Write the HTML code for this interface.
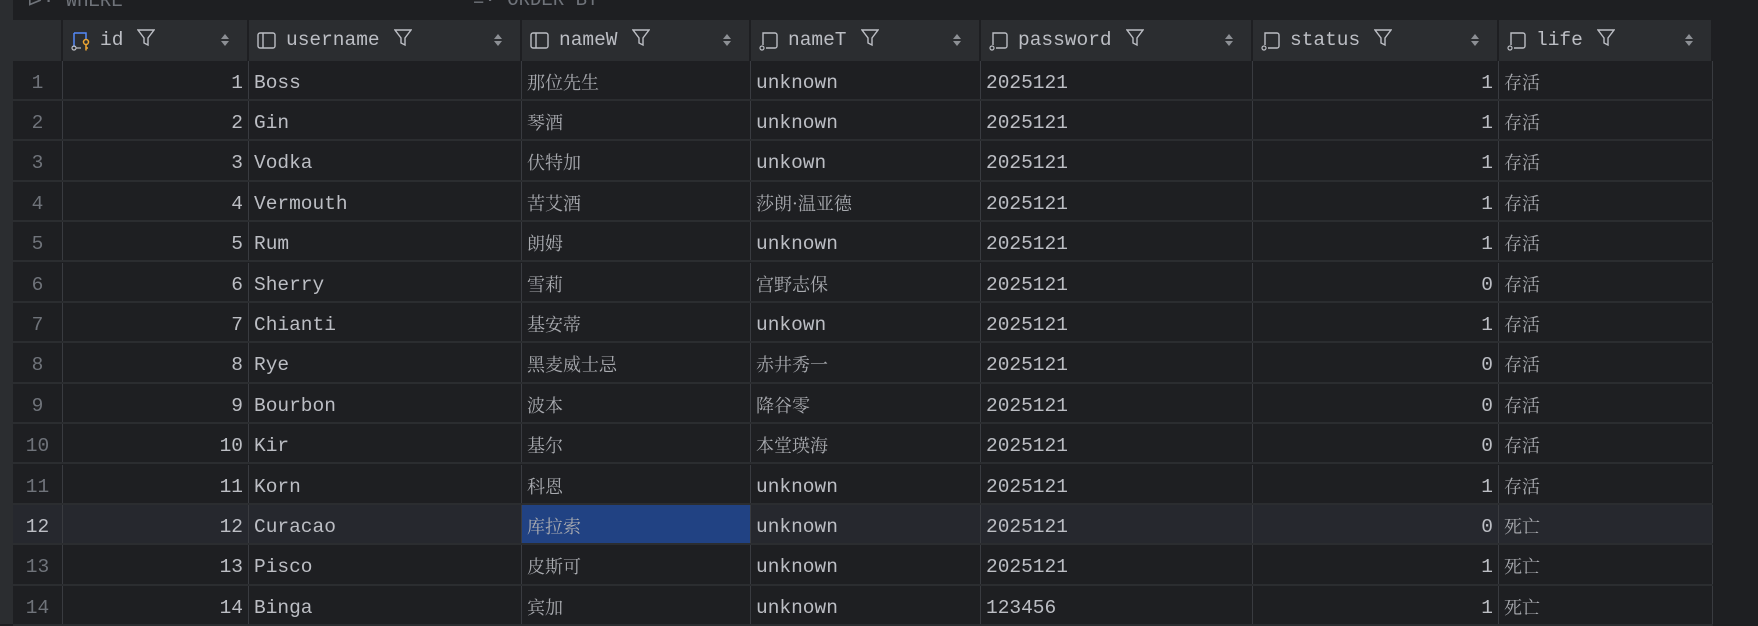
<!DOCTYPE html>
<html><head><meta charset="utf-8"><style>
*{margin:0;padding:0;box-sizing:border-box}
body{width:1758px;height:624px;overflow:hidden;background:#1e1f22;font-family:"Liberation Mono",monospace;color:#bcbec4;position:relative}
.strip{position:absolute;left:0;top:0;width:13px;height:624px;background:#2b2d30}
.top{position:absolute;left:13px;top:0;width:1745px;height:20px;background:#1e1f22;overflow:hidden}
.top span{position:absolute;top:-11px;font-size:19px;color:#6f737a}
.row{position:absolute;left:13px;width:1700px;height:40.4px;display:flex;border-bottom:2px solid #2b2d30}
.c{height:100%;border-right:1px solid #393b40;font-size:19.5px;line-height:44px;padding:0 5px;white-space:nowrap;overflow:hidden;position:relative}
.n{text-align:right}
.rn{text-align:center;color:#6f737a}
.cjk{font-family:"Noto Serif CJK SC","Noto Sans CJK SC",serif;font-size:18px;color:#a9abb0;line-height:43px}
.hd{top:20px;height:40.5px;background:#2b2d30;border-bottom:none}
.hd .c{border-right:2px solid #1e1f22;line-height:41px;padding-left:37px;color:#bcbec4}
.hd .c:first-child{padding:0}
.ic{position:absolute;left:8px;top:11px}
.fl{display:inline-block;vertical-align:middle;margin-left:14px;margin-top:-4px}
.so{position:absolute;right:18px;top:14px}
.w0{width:50px}.w1{width:186px}.w2{width:273px}.w3{width:229px}.w4{width:230px}.w5{width:272px}.w6{width:246px}.w7{width:214px}
.sel{background:#214283}
.hl{background:#26282e}
</style></head><body>
<div class="strip"></div>
<div class="top"><span style="left:14px">⊳· WHERE</span><span style="left:460px">≡· ORDER BY</span></div>

<div class="row hd">
<div class="c w0"></div>
<div class="c w1"><svg class="ic" width="22" height="20" viewBox="0 0 22 20"><path d="M3 2h12v6M3 2v14" stroke="#548af7" stroke-width="1.5" fill="none"/><circle cx="3" cy="17" r="2" stroke="#bcbec4" fill="none" stroke-width="1.2"/><path d="M5 17h5" stroke="#bcbec4" stroke-width="1.2"/><circle cx="15" cy="11" r="2.5" stroke="#f0a732" fill="none" stroke-width="1.5"/><path d="M15 13.5v6M15 17h2" stroke="#f0a732" stroke-width="1.5"/></svg>id<svg class="fl" width="18" height="18" viewBox="0 0 18 18"><path d="M1 1h16l-6 8v7l-4 -2v-5z" stroke="#bcbec4" fill="none" stroke-width="1.4"/></svg><svg class="so" width="8" height="12" viewBox="0 0 8 12"><path d="M4 0l4 5H0zM4 12l4-5H0z" fill="#8c8f94"/></svg></div>
<div class="c w2"><svg class="ic" width="20" height="20" viewBox="0 0 20 20"><rect x="1" y="2" width="17" height="15" rx="2" stroke="#bcbec4" fill="none" stroke-width="1.4"/><path d="M6 2v15" stroke="#bcbec4" stroke-width="1.4"/></svg>username<svg class="fl" width="18" height="18" viewBox="0 0 18 18"><path d="M1 1h16l-6 8v7l-4 -2v-5z" stroke="#bcbec4" fill="none" stroke-width="1.4"/></svg><svg class="so" width="8" height="12" viewBox="0 0 8 12"><path d="M4 0l4 5H0zM4 12l4-5H0z" fill="#8c8f94"/></svg></div>
<div class="c w3"><svg class="ic" width="20" height="20" viewBox="0 0 20 20"><rect x="1" y="2" width="17" height="15" rx="2" stroke="#bcbec4" fill="none" stroke-width="1.4"/><path d="M6 2v15" stroke="#bcbec4" stroke-width="1.4"/></svg>nameW<svg class="fl" width="18" height="18" viewBox="0 0 18 18"><path d="M1 1h16l-6 8v7l-4 -2v-5z" stroke="#bcbec4" fill="none" stroke-width="1.4"/></svg><svg class="so" width="8" height="12" viewBox="0 0 8 12"><path d="M4 0l4 5H0zM4 12l4-5H0z" fill="#8c8f94"/></svg></div>
<div class="c w4"><svg class="ic" width="20" height="20" viewBox="0 0 20 20"><path d="M4 14V2h12a2 2 0 0 1 2 2v11a2 2 0 0 1-2 2H7" stroke="#bcbec4" fill="none" stroke-width="1.4"/><circle cx="3" cy="17" r="2" stroke="#bcbec4" fill="none" stroke-width="1.2"/></svg>nameT<svg class="fl" width="18" height="18" viewBox="0 0 18 18"><path d="M1 1h16l-6 8v7l-4 -2v-5z" stroke="#bcbec4" fill="none" stroke-width="1.4"/></svg><svg class="so" width="8" height="12" viewBox="0 0 8 12"><path d="M4 0l4 5H0zM4 12l4-5H0z" fill="#8c8f94"/></svg></div>
<div class="c w5"><svg class="ic" width="20" height="20" viewBox="0 0 20 20"><path d="M4 14V2h12a2 2 0 0 1 2 2v11a2 2 0 0 1-2 2H7" stroke="#bcbec4" fill="none" stroke-width="1.4"/><circle cx="3" cy="17" r="2" stroke="#bcbec4" fill="none" stroke-width="1.2"/></svg>password<svg class="fl" width="18" height="18" viewBox="0 0 18 18"><path d="M1 1h16l-6 8v7l-4 -2v-5z" stroke="#bcbec4" fill="none" stroke-width="1.4"/></svg><svg class="so" width="8" height="12" viewBox="0 0 8 12"><path d="M4 0l4 5H0zM4 12l4-5H0z" fill="#8c8f94"/></svg></div>
<div class="c w6"><svg class="ic" width="20" height="20" viewBox="0 0 20 20"><path d="M4 14V2h12a2 2 0 0 1 2 2v11a2 2 0 0 1-2 2H7" stroke="#bcbec4" fill="none" stroke-width="1.4"/><circle cx="3" cy="17" r="2" stroke="#bcbec4" fill="none" stroke-width="1.2"/></svg>status<svg class="fl" width="18" height="18" viewBox="0 0 18 18"><path d="M1 1h16l-6 8v7l-4 -2v-5z" stroke="#bcbec4" fill="none" stroke-width="1.4"/></svg><svg class="so" width="8" height="12" viewBox="0 0 8 12"><path d="M4 0l4 5H0zM4 12l4-5H0z" fill="#8c8f94"/></svg></div>
<div class="c w7"><svg class="ic" width="20" height="20" viewBox="0 0 20 20"><path d="M4 14V2h12a2 2 0 0 1 2 2v11a2 2 0 0 1-2 2H7" stroke="#bcbec4" fill="none" stroke-width="1.4"/><circle cx="3" cy="17" r="2" stroke="#bcbec4" fill="none" stroke-width="1.2"/></svg>life<svg class="fl" width="18" height="18" viewBox="0 0 18 18"><path d="M1 1h16l-6 8v7l-4 -2v-5z" stroke="#bcbec4" fill="none" stroke-width="1.4"/></svg><svg class="so" width="8" height="12" viewBox="0 0 8 12"><path d="M4 0l4 5H0zM4 12l4-5H0z" fill="#8c8f94"/></svg></div>
</div>

<div class="row" style="top:60.5px"><div class="c w0 rn">1</div><div class="c w1 n">1</div><div class="c w2">Boss</div><div class="c w3 cjk">那位先生</div><div class="c w4">unknown</div><div class="c w5">2025121</div><div class="c w6 n">1</div><div class="c w7 cjk">存活</div></div>
<div class="row" style="top:100.9px"><div class="c w0 rn">2</div><div class="c w1 n">2</div><div class="c w2">Gin</div><div class="c w3 cjk">琴酒</div><div class="c w4">unknown</div><div class="c w5">2025121</div><div class="c w6 n">1</div><div class="c w7 cjk">存活</div></div>
<div class="row" style="top:141.3px"><div class="c w0 rn">3</div><div class="c w1 n">3</div><div class="c w2">Vodka</div><div class="c w3 cjk">伏特加</div><div class="c w4">unkown</div><div class="c w5">2025121</div><div class="c w6 n">1</div><div class="c w7 cjk">存活</div></div>
<div class="row" style="top:181.7px"><div class="c w0 rn">4</div><div class="c w1 n">4</div><div class="c w2">Vermouth</div><div class="c w3 cjk">苦艾酒</div><div class="c w4 cjk">莎朗·温亚德</div><div class="c w5">2025121</div><div class="c w6 n">1</div><div class="c w7 cjk">存活</div></div>
<div class="row" style="top:222.1px"><div class="c w0 rn">5</div><div class="c w1 n">5</div><div class="c w2">Rum</div><div class="c w3 cjk">朗姆</div><div class="c w4">unknown</div><div class="c w5">2025121</div><div class="c w6 n">1</div><div class="c w7 cjk">存活</div></div>
<div class="row" style="top:262.5px"><div class="c w0 rn">6</div><div class="c w1 n">6</div><div class="c w2">Sherry</div><div class="c w3 cjk">雪莉</div><div class="c w4 cjk">宫野志保</div><div class="c w5">2025121</div><div class="c w6 n">0</div><div class="c w7 cjk">存活</div></div>
<div class="row" style="top:302.9px"><div class="c w0 rn">7</div><div class="c w1 n">7</div><div class="c w2">Chianti</div><div class="c w3 cjk">基安蒂</div><div class="c w4">unkown</div><div class="c w5">2025121</div><div class="c w6 n">1</div><div class="c w7 cjk">存活</div></div>
<div class="row" style="top:343.3px"><div class="c w0 rn">8</div><div class="c w1 n">8</div><div class="c w2">Rye</div><div class="c w3 cjk">黑麦威士忌</div><div class="c w4 cjk">赤井秀一</div><div class="c w5">2025121</div><div class="c w6 n">0</div><div class="c w7 cjk">存活</div></div>
<div class="row" style="top:383.7px"><div class="c w0 rn">9</div><div class="c w1 n">9</div><div class="c w2">Bourbon</div><div class="c w3 cjk">波本</div><div class="c w4 cjk">降谷零</div><div class="c w5">2025121</div><div class="c w6 n">0</div><div class="c w7 cjk">存活</div></div>
<div class="row" style="top:424.1px"><div class="c w0 rn">10</div><div class="c w1 n">10</div><div class="c w2">Kir</div><div class="c w3 cjk">基尔</div><div class="c w4 cjk">本堂瑛海</div><div class="c w5">2025121</div><div class="c w6 n">0</div><div class="c w7 cjk">存活</div></div>
<div class="row" style="top:464.5px"><div class="c w0 rn">11</div><div class="c w1 n">11</div><div class="c w2">Korn</div><div class="c w3 cjk">科恩</div><div class="c w4">unknown</div><div class="c w5">2025121</div><div class="c w6 n">1</div><div class="c w7 cjk">存活</div></div>
<div class="row hl" style="top:504.9px"><div class="c w0 rn" style="color:#bcbec4">12</div><div class="c w1 n">12</div><div class="c w2">Curacao</div><div class="c w3 cjk sel">库拉索</div><div class="c w4">unknown</div><div class="c w5">2025121</div><div class="c w6 n">0</div><div class="c w7 cjk">死亡</div></div>
<div class="row" style="top:545.3px"><div class="c w0 rn">13</div><div class="c w1 n">13</div><div class="c w2">Pisco</div><div class="c w3 cjk">皮斯可</div><div class="c w4">unknown</div><div class="c w5">2025121</div><div class="c w6 n">1</div><div class="c w7 cjk">死亡</div></div>
<div class="row" style="top:585.7px"><div class="c w0 rn">14</div><div class="c w1 n">14</div><div class="c w2">Binga</div><div class="c w3 cjk">宾加</div><div class="c w4">unknown</div><div class="c w5">123456</div><div class="c w6 n">1</div><div class="c w7 cjk">死亡</div></div>
</body></html>
